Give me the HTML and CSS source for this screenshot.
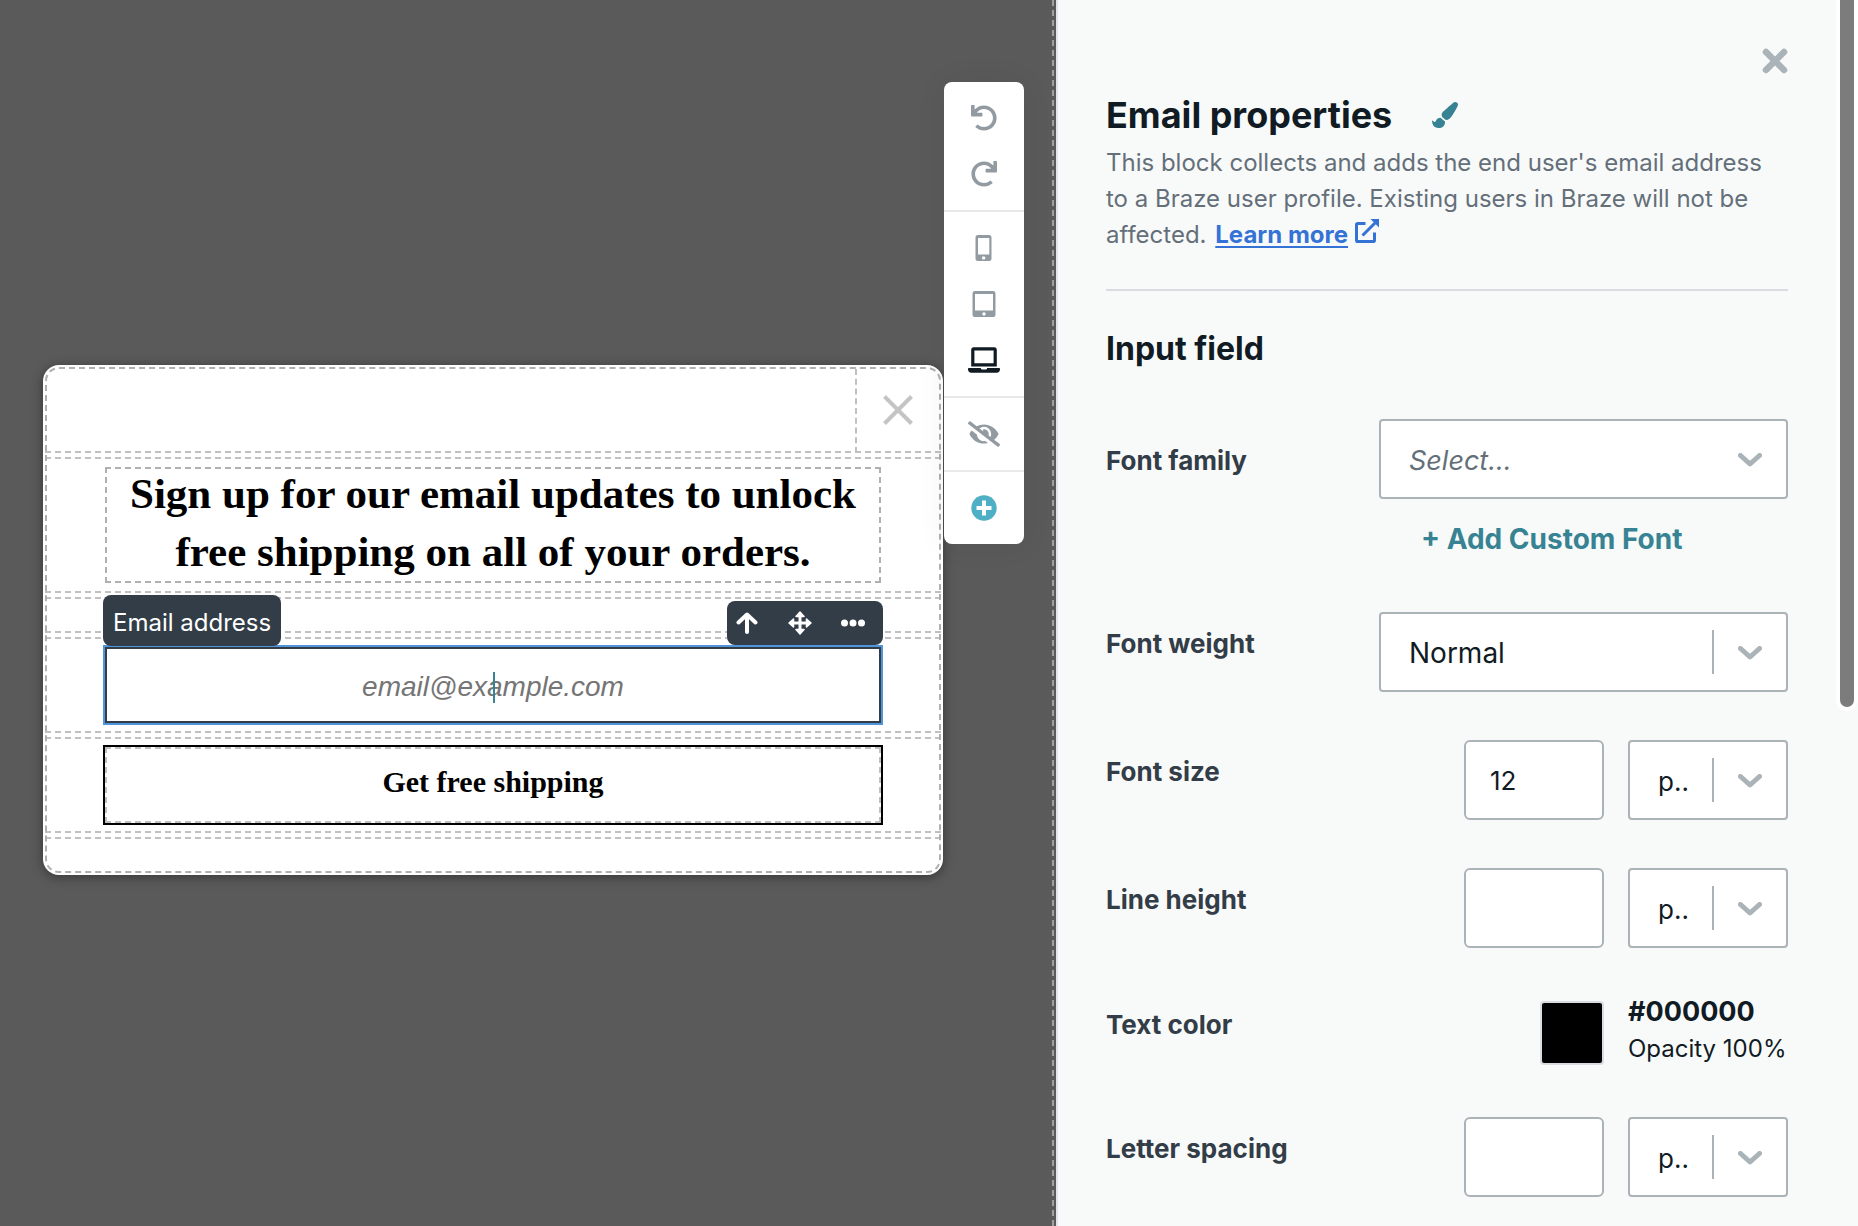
FILE: index.html
```html
<!DOCTYPE html>
<html lang="en">
<head>
<meta charset="utf-8">
<meta name="viewport" content="width=device-width, initial-scale=1">
<title>Email properties</title>
<link rel="stylesheet" href="styles.css">
</head>
<body>
<div class="editor">
  <main class="workspace">
    <section class="modal" aria-label="Message preview">
      <div class="row row-close">
        <button class="modal-close" type="button" aria-label="Close message">
          <svg width="30" height="30" viewBox="0 0 30 30" fill="none" stroke="#c4c4c4" stroke-width="4"><path d="M1.5 1.5l27 27M28.5 1.5l-27 27"/></svg>
        </button>
      </div>
      <div class="row">
        <h2 class="headline">Sign up for our email updates to unlock<br>free shipping on all of your orders.</h2>
      </div>
      <div class="row row-spacer"></div>
      <div class="row">
        <div class="email-block">
          <label class="block-name" for="email">Email address</label>
          <div class="block-tools">
            <button type="button" aria-label="Select parent">
              <svg width="22" height="22" viewBox="0 0 22 22" fill="none" stroke="#fff" stroke-width="4" stroke-linecap="round" stroke-linejoin="round"><path d="M11 20V3M2.500 10.500L11 2.500l8.500 8"/></svg>
            </button>
            <button type="button" aria-label="Move">
              <svg width="24" height="24" viewBox="0 0 24 24" fill="#fff"><path d="M11 4h2v16h-2zM4 11h16v2H4z" stroke="#fff" stroke-width="1"/><path d="M12 1l4 4.500H8zM12 23l4-4.500H8zM1 12l4.500-4v8zM23 12l-4.500-4v8z" stroke="#fff" stroke-width="1.500" stroke-linejoin="round"/></svg>
            </button>
            <button type="button" aria-label="More actions">
              <svg width="24" height="8" viewBox="0 0 24 8" fill="#fff"><circle cx="3.500" cy="4" r="3.500"/><circle cx="12" cy="4" r="3.500"/><circle cx="20.500" cy="4" r="3.500"/></svg>
            </button>
          </div>
          <input class="email-input" id="email" type="email" placeholder="email@example.com">
          <span class="caret"></span>
        </div>
      </div>
      <div class="row">
        <button class="submit" type="button">Get free shipping</button>
      </div>
      <div class="row row-spacer"></div>
    </section>

    <nav class="toolbar" aria-label="Editor tools">
      <div class="tool-group">
        <button type="button" aria-label="Undo">
          <svg width="26" height="26" viewBox="0 0 512 512"><path d="M212.333 224.333H12c-6.627 0-12-5.373-12-12V12C0 5.373 5.373 0 12 0h48c6.627 0 12 5.373 12 12v78.112C117.773 39.279 184.260 7.470 258.175 8.007c136.906.994 246.448 111.623 246.157 248.532C504.041 393.258 393.120 504 256.333 504c-64.089 0-122.496-24.313-166.510-64.215-5.099-4.622-5.334-12.554-.467-17.420l33.967-33.967c4.474-4.474 11.662-4.717 16.401-.525C170.760 415.336 211.580 432 256.333 432c97.268 0 176-78.716 176-176 0-97.267-78.716-176-176-176-58.496 0-110.280 28.476-142.274 72.333h98.274c6.627 0 12 5.373 12 12v48c0 6.627-5.373 12-12 12z"/></svg>
        </button>
        <button type="button" aria-label="Redo">
          <svg width="26" height="26" viewBox="0 0 512 512"><path transform="matrix(-1 0 0 1 512 0)" d="M212.333 224.333H12c-6.627 0-12-5.373-12-12V12C0 5.373 5.373 0 12 0h48c6.627 0 12 5.373 12 12v78.112C117.773 39.279 184.260 7.470 258.175 8.007c136.906.994 246.448 111.623 246.157 248.532C504.041 393.258 393.120 504 256.333 504c-64.089 0-122.496-24.313-166.510-64.215-5.099-4.622-5.334-12.554-.467-17.420l33.967-33.967c4.474-4.474 11.662-4.717 16.401-.525C170.760 415.336 211.580 432 256.333 432c97.268 0 176-78.716 176-176 0-97.267-78.716-176-176-176-58.496 0-110.280 28.476-142.274 72.333h98.274c6.627 0 12 5.373 12 12v48c0 6.627-5.373 12-12 12z"/></svg>
        </button>
      </div>
      <div class="tool-group">
        <button type="button" aria-label="Mobile">
          <svg width="18" height="26" viewBox="0 0 18 26"><path fill-rule="evenodd" d="M3 0h11a2.500 2.500 0 0 1 2.500 2.500v21A2.500 2.500 0 0 1 14 26H3a2.500 2.500 0 0 1-2.500-2.500v-21A2.500 2.500 0 0 1 3 0zM3 3v16.500h11.300V3zM8.600 21.200a1.700 1.700 0 1 0 .01 0z"/></svg>
        </button>
        <button type="button" aria-label="Tablet">
          <svg width="24" height="26" viewBox="0 0 24 26"><path fill-rule="evenodd" d="M3 0h18a2.500 2.500 0 0 1 2.500 2.500v21A2.500 2.500 0 0 1 21 26H3a2.500 2.500 0 0 1-2.500-2.500v-21A2.500 2.500 0 0 1 3 0zM3 3v16.500h18V3zM12 21.200a1.700 1.700 0 1 0 .01 0z"/></svg>
        </button>
        <button class="is-active" type="button" aria-label="Desktop">
          <svg width="32" height="26" viewBox="0 0 640 512"><path d="M624 416H381.540c-.740 19.810-14.710 32-32.740 32H288c-18.690 0-33.020-17.470-32.770-32H16c-8.800 0-16 7.200-16 16v16c0 35.200 28.800 64 64 64h512c35.200 0 64-28.800 64-64v-16c0-8.800-7.200-16-16-16zM576 48c0-26.400-21.600-48-48-48H112C85.600 0 64 21.600 64 48v336h512V48zm-64 272H128V64h384v256z"/></svg>
        </button>
      </div>
      <div class="tool-group">
        <button type="button" aria-label="Toggle outlines">
          <svg width="32" height="26" viewBox="0 0 640 512"><path d="M320 400c-75.850 0-137.250-58.710-142.900-133.110L72.200 185.820c-13.790 17.300-26.480 35.590-36.720 55.590a32.350 32.350 0 0 0 0 29.190C89.710 376.410 197.070 448 320 448c26.910 0 52.870-4 77.890-10.460L346 397.390a144.130 144.130 0 0 1-26 2.610zm313.820 58.100l-110.550-85.440a331.250 331.250 0 0 0 81.250-102.070 32.350 32.350 0 0 0 0-29.190C550.290 135.590 442.930 64 320 64a308.150 308.150 0 0 0-147.320 37.700L45.460 3.370A16 16 0 0 0 23 6.180L3.370 31.450A16 16 0 0 0 6.180 53.900l588.360 454.730a16 16 0 0 0 22.460-2.810l19.640-25.270a16 16 0 0 0-2.820-22.450zm-183.720-142l-39.300-30.380A94.750 94.750 0 0 0 416 256a94.760 94.760 0 0 0-121.310-92.210A47.650 47.650 0 0 1 304 192a46.640 46.640 0 0 1-1.540 10l-73.610-56.890A142.310 142.310 0 0 1 320 112a143.920 143.920 0 0 1 144 144c0 21.630-5.290 41.790-13.900 60.110z"/></svg>
        </button>
      </div>
      <div class="tool-group">
        <button class="is-add" type="button" aria-label="Add">
          <svg width="26" height="26" viewBox="0 0 26 26"><circle cx="13" cy="13" r="12.700"/><path fill="#fff" d="M11 5.500h4V11h5.500v4H15v5.500h-4V15H5.500v-4H11z"/></svg>
        </button>
      </div>
    </nav>
  </main>

  <aside class="panel">
    <div class="scrollbar"></div>
    <button class="panel-close" type="button" aria-label="Close panel">
      <svg width="26" height="26" viewBox="0 0 26 26" fill="none" stroke="#a9b3b8" stroke-width="6.500" stroke-linecap="round"><path d="M4 4l18 18M22 4L4 22"/></svg>
    </button>
    <header class="panel-head">
      <h1>Email properties</h1>
      <svg width="26" height="26" viewBox="0 0 512 512" fill="#378393"><path d="M167.020 309.340c-40.120 2.580-76.530 17.860-97.190 72.300-2.350 6.210-8 9.980-14.590 9.980-11.110 0-45.460-27.670-55.250-34.350C0 439.620 37.930 512 128 512c75.860 0 128-43.770 128-120.190 0-3.110-.650-6.080-.970-9.130l-88.010-73.340zM457.890 0c-15.160 0-29.370 6.710-40.210 16.450C213.270 199.050 192 203.340 192 257.090c0 13.700 3.250 26.760 8.730 38.700l63.820 53.180c7.210 1.800 14.640 3.030 22.390 3.030 62.110 0 98.110-45.470 211.160-256.460 7.380-14.350 13.900-29.850 13.900-45.990C512 20.640 486 0 457.890 0z"/></svg>
    </header>
    <p class="intro">This block collects and adds the end user's email address to a Braze user profile. Existing users in Braze will not be affected. <a href="#learn-more">Learn more</a> <svg class="external" width="24" height="24" viewBox="0 0 24 24" fill="none" stroke="#3572d6" stroke-width="3"><path d="M10.500 4.500H2.800a1.300 1.300 0 0 0-1.300 1.300v15.400a1.300 1.300 0 0 0 1.300 1.300h15.400a1.300 1.300 0 0 0 1.300-1.300V13.500"/><path d="M7.500 16.500L20 4"/><path fill="#3572d6" stroke="none" d="M15.500 0H24v8.500z"/></svg></p>

    <h2 class="section-title">Input field</h2>

    <form class="fields">
      <div class="field field-family">
        <label for="font-family">Font family</label>
        <span class="select is-empty wide">
          <select id="font-family"><option>Select…</option></select>
          <svg class="chevron" width="24" height="14" viewBox="0 0 24 14"><path d="M2.500 2.500L12 11l9.500-8.500"/></svg>
        </span>
        <button class="add-font" type="button">+ Add Custom Font</button>
      </div>
      <div class="field">
        <label for="font-weight">Font weight</label>
        <span class="select split wide">
          <select id="font-weight"><option>Normal</option></select>
          <svg class="chevron" width="24" height="14" viewBox="0 0 24 14"><path d="M2.500 2.500L12 11l9.500-8.500"/></svg>
        </span>
      </div>
      <div class="field">
        <label for="font-size">Font size</label>
        <input class="number" id="font-size" type="text" value="12">
        <span class="select split unit">
          <select aria-label="Font size unit"><option>p..</option></select>
          <svg class="chevron" width="24" height="14" viewBox="0 0 24 14"><path d="M2.500 2.500L12 11l9.500-8.500"/></svg>
        </span>
      </div>
      <div class="field">
        <label for="line-height">Line height</label>
        <input class="number" id="line-height" type="text">
        <span class="select split unit">
          <select aria-label="Line height unit"><option>p..</option></select>
          <svg class="chevron" width="24" height="14" viewBox="0 0 24 14"><path d="M2.500 2.500L12 11l9.500-8.500"/></svg>
        </span>
      </div>
      <div class="field field-color">
        <label for="text-color">Text color</label>
        <button class="swatch" id="text-color" type="button" aria-label="Text color #000000"></button>
        <div class="color-value">
          <strong>#000000</strong>
          <span>Opacity 100%</span>
        </div>
      </div>
      <div class="field">
        <label for="letter-spacing">Letter spacing</label>
        <input class="number" id="letter-spacing" type="text">
        <span class="select split unit">
          <select aria-label="Letter spacing unit"><option>p..</option></select>
          <svg class="chevron" width="24" height="14" viewBox="0 0 24 14"><path d="M2.500 2.500L12 11l9.500-8.500"/></svg>
        </span>
      </div>
    </form>
  </aside>
</div>
</body>
</html>
```
FILE: styles.css
```css
*,
*::before,
*::after {
  box-sizing: border-box;
}

body {
  margin: 0;
  font-family: Inter, "Open Sans", sans-serif;
  font-size: 24px;
  color: #111b24;
  background: #f8faf9;
}

button {
  padding: 0;
  border: 0;
  background: none;
  font: inherit;
  color: inherit;
  cursor: pointer;
}

svg {
  display: block;
}

h1,
h2,
p {
  margin: 0;
}

.editor {
  display: grid;
  grid-template-columns: minmax(0, 1fr) 802px;
  min-height: 100vh;
}

/* Canvas */

.workspace {
  position: relative;
  display: flex;
  align-items: center;
  padding: 14px 113px 0 43px;
  background: #5a5a5a;
}

.workspace::after {
  content: "";
  position: absolute;
  top: 0;
  bottom: 0;
  right: 2px;
  border-left: 2px dashed #a0a0a0;
}

.modal {
  flex: 1;
  display: flex;
  flex-direction: column;
  gap: 4px;
  padding: 2px;
  border-radius: 16px;
  background: #fff;
  outline: 2px dashed #b0b0b0;
  outline-offset: -4px;
  box-shadow: 0 2px 12px rgba(0, 0, 0, 0.4);
}

.row {
  padding: 6px 58px;
  border: 2px dashed #c0c0c0;
  border-width: 2px 0;
}

.row:first-child {
  border-top-color: transparent;
}

.row:last-child {
  border-bottom-color: transparent;
}

.row-spacer {
  height: 36px;
}

.row-close {
  display: flex;
  justify-content: flex-end;
  height: 86px;
  padding: 0;
}

.modal-close {
  display: flex;
  align-items: center;
  justify-content: center;
  width: 86px;
  margin-bottom: -2px;
  padding-right: 2px;
  border: 2px dashed #c0c0c0;
  border-width: 0 0 2px 2px;
}

.headline {
  padding-bottom: 4px;
  font: bold 43px/58px "Palatino Linotype", Palatino, "Liberation Serif", serif;
  color: #000;
  text-align: center;
  outline: 2px dashed #b0b0b0;
  outline-offset: -4px;
}

.email-block {
  position: relative;
  border: 2px solid #5094dc;
}

.email-input {
  display: block;
  width: 100%;
  height: 76px;
  padding: 4px 20px 0;
  border: 2px solid #333d47;
  border-radius: 0;
  background: #fff;
  font: italic 28px "Liberation Sans", Arial, sans-serif;
  text-align: center;
}

.email-input::placeholder {
  color: #757575;
}

.caret {
  position: absolute;
  top: 25px;
  left: 50%;
  width: 2px;
  height: 31px;
  background: #378393;
}

.block-name,
.block-tools {
  position: absolute;
  bottom: 100%;
  border-radius: 8px;
  background: #333d47;
  color: #fff;
}

.block-name {
  left: -2px;
  margin-bottom: 1px;
  padding: 8px 10px 3px;
  line-height: 40px;
}

.block-tools {
  right: -2px;
  display: flex;
  gap: 13px;
  width: 156px;
  height: 44px;
  margin-bottom: 2px;
}

.block-tools button {
  display: grid;
  place-items: center;
  width: 40px;
}

.submit {
  display: block;
  width: 100%;
  height: 80px;
  padding-bottom: 6px;
  border: 2px solid #000;
  outline: 2px dashed #c0c0c0;
  outline-offset: -4px;
  font: bold 30px "Palatino Linotype", Palatino, "Liberation Serif", serif;
  color: #000;
}

/* Floating toolbar */

.toolbar {
  position: absolute;
  top: 82px;
  right: 32px;
  width: 80px;
  border-radius: 8px;
  background: #fff;
  box-shadow: 0 0 32px rgba(0, 0, 0, 0.06);
}

.tool-group {
  padding: 8px 0;
}

.tool-group + .tool-group {
  border-top: 2px solid #e8e9ea;
}

.tool-group button {
  display: grid;
  place-items: center;
  width: 100%;
  height: 56px;
  fill: #929ba2;
}

.tool-group .is-active {
  fill: #111b24;
}

.tool-group .is-add {
  fill: #4fafc4;
}

/* Properties panel */

.panel {
  position: relative;
  padding: 48px 70px 28px 48px;
  border-left: 2px solid #e2e5e9;
  background: #f8faf9;
}

.scrollbar {
  position: absolute;
  top: -16px;
  right: 0;
  width: 22px;
  height: 727px;
  border: 4px solid #fff;
  border-radius: 11px;
  background: #7c7c7c;
}

.panel-close {
  display: block;
  margin-left: auto;
}

.panel-head {
  display: flex;
  align-items: center;
  gap: 40px;
  margin-top: 19px;
}

.panel-head h1 {
  font-size: 36px;
  line-height: 44px;
}

.intro {
  margin-top: 8px;
  padding-bottom: 36px;
  border-bottom: 2px solid #d9dde2;
  line-height: 36px;
  color: #646f79;
}

.intro a {
  margin-left: 2px;
  font-weight: 700;
  color: #3572d6;
  text-decoration-thickness: 2px;
  text-underline-offset: 3px;
}

.external {
  display: inline-block;
  vertical-align: baseline;
}

.section-title {
  margin-top: 38px;
  font-size: 32px;
  line-height: 40px;
}

.fields {
  display: flex;
  flex-direction: column;
  gap: 48px;
  margin-top: 50px;
}

.field {
  display: flex;
  align-items: flex-start;
}

.field label {
  margin: 12px auto 0 0;
  font-size: 26px;
  font-weight: 700;
  line-height: 40px;
  color: #333d47;
}

.field-family {
  display: grid;
  grid-template-columns: 1fr 409px;
}

.field-family label {
  margin-top: 22px;
}

.select {
  position: relative;
  display: block;
  height: 80px;
}

.select.wide {
  width: 409px;
}

.select.unit {
  width: 160px;
  margin-left: 24px;
}

.select select {
  appearance: none;
  width: 100%;
  height: 100%;
  padding: 2px 84px 0 28px;
  border: 2px solid #a9b3b8;
  border-radius: 4px;
  background: #fff;
  font: 28px Inter, "Open Sans", sans-serif;
  color: #111b24;
}

.select.unit select {
  padding-right: 96px;
  font-size: 26px;
}

.select.is-empty select {
  font-size: 27px;
  font-style: italic;
  color: #646f79;
}

.select.split::after {
  content: "";
  position: absolute;
  top: 18px;
  right: 74px;
  width: 2px;
  height: 44px;
  background: #a9b3b8;
}

.chevron {
  position: absolute;
  top: 34px;
  right: 26px;
  fill: none;
  stroke: #a9b3b8;
  stroke-width: 5;
  stroke-linecap: round;
  stroke-linejoin: round;
  pointer-events: none;
}

.add-font {
  grid-column: 2;
  justify-self: start;
  margin: 16px 0 1px 42px;
  font-size: 28px;
  font-weight: 700;
  line-height: 48px;
  color: #378393;
}

.number {
  width: 140px;
  height: 80px;
  padding: 0 24px;
  border: 2px solid #a9b3b8;
  border-radius: 6px;
  background: #fff;
  font: 26px Inter, "Open Sans", sans-serif;
  color: #111b24;
}

.field-color label {
  margin-top: 9px;
}

.swatch {
  align-self: center;
  width: 64px;
  height: 64px;
  border: 2px solid #d9dde2;
  border-radius: 4px;
  background: #000;
}

.color-value {
  display: flex;
  flex-direction: column;
  width: 160px;
  margin-left: 24px;
  line-height: 41px;
  white-space: nowrap;
}

.color-value strong {
  font-size: 27px;
  line-height: 32px;
}
```
